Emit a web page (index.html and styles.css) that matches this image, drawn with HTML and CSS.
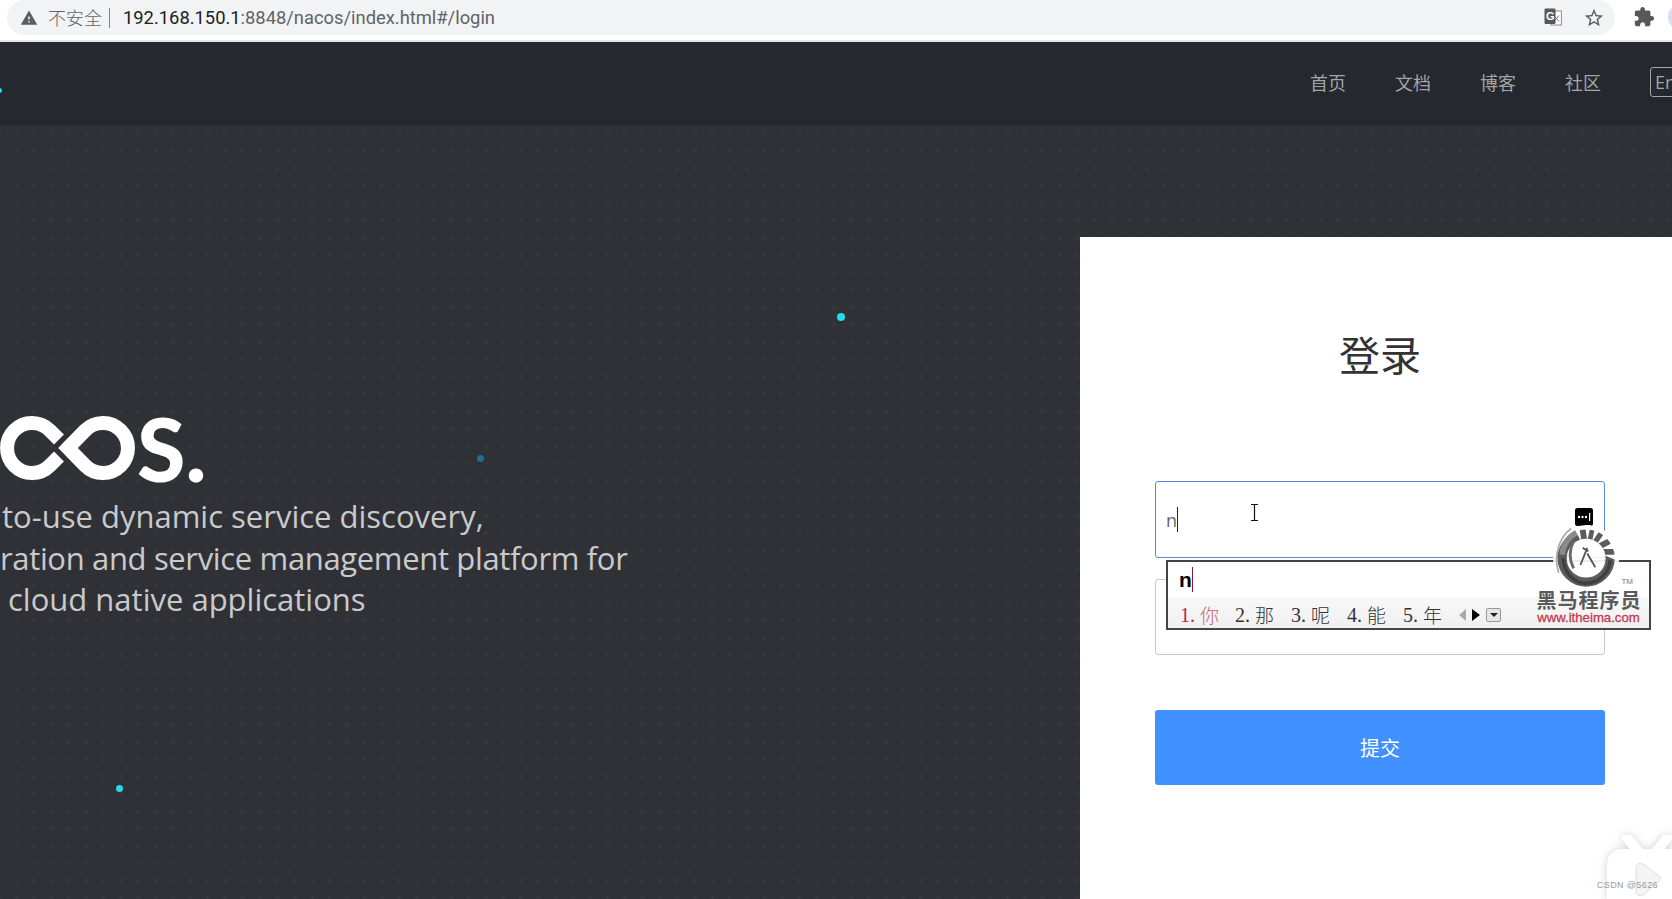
FILE: index.html
```html
<!DOCTYPE html>
<html lang="zh-CN">
<head>
<meta charset="utf-8">
<title>Nacos</title>
<link rel="stylesheet" href="styles.css">
</head>
<body>
<div class="page">
  <div class="toolbar">
    <div class="pill">
      <svg class="warn" viewBox="0 0 24 24"><path d="M1 21h22L12 2 1 21zm12-3h-2v-2h2v2zm0-4h-2v-4h2v4z"/></svg>
      <span class="insecure">不安全</span>
      <span class="sep"></span>
      <span class="url"><span class="host">192.168.150.1</span>:8848/nacos/index.html#/login</span>
      <svg class="translate" viewBox="0 0 18 19">
        <rect x="7" y="3" width="10.4" height="14" fill="#fff" stroke="#8a8d90" stroke-width="1"/>
        <path d="M10 7.500l5 6M15 7.500l-5 6" stroke="#7b7e82" stroke-width="1" fill="none"/>
        <rect x="0.5" y="0.5" width="11" height="15.5" rx="1.2" fill="#55585c"/>
        <text x="2" y="12" class="translate-g">G</text>
      </svg>
      <svg class="star" viewBox="0 0 24 24"><path d="M22 9.24l-7.19-.62L12 2 9.19 8.63 2 9.24l5.46 4.73L5.82 21 12 17.27 18.18 21l-1.63-7.03L22 9.24zM12 15.4l-3.76 2.27 1-4.28-3.32-2.88 4.38-.38L12 6.1l1.71 4.04 4.38.38-3.32 2.88 1 4.28L12 15.4z"/></svg>
    </div>
    <svg class="puzzle" viewBox="0 0 24 24"><path d="M20.5 11H19V7c0-1.1-.9-2-2-2h-4V3.5C13 2.12 11.88 1 10.5 1S8 2.12 8 3.5V5H4c-1.1 0-1.99.9-1.99 2v3.8H3.5c1.49 0 2.7 1.21 2.7 2.7s-1.21 2.7-2.7 2.7H2V20c0 1.1.9 2 2 2h3.8v-1.5c0-1.49 1.21-2.7 2.7-2.7 1.49 0 2.7 1.21 2.7 2.7V22H17c1.1 0 2-.9 2-2v-4h1.5c1.38 0 2.5-1.12 2.5-2.5S21.88 11 20.5 11z"/></svg>
    <span class="avatar"></span>
  </div>

  <header class="site-header">
    <nav class="nav">
      <a class="nav-link">首页</a>
      <a class="nav-link">文档</a>
      <a class="nav-link">博客</a>
      <a class="nav-link">社区</a>
      <span class="lang">En</span>
    </nav>
  </header>

  <main class="main">
    <section class="intro">
      <div class="logo">
        <svg class="logo-mark" viewBox="0 416 136 64">
          <path d="M59 439.5L49.900 430.500A25 25 0 1 0 49.900 465.500L59 456.500"/>
          <path d="M68 448L85.100 430.500A25 25 0 1 1 85.100 465.500Z"/>
        </svg>
        <span class="logo-text">S.</span>
      </div>
      <p class="tag tag-one">to-use dynamic service discovery,</p>
      <p class="tag tag-two">ration and service management platform for</p>
      <p class="tag tag-three">cloud native applications</p>
    </section>

    <section class="card">
      <h1 class="title">登录</h1>
      <div class="field field-active">
        <span class="typed">n</span><span class="caret"></span>
        <svg class="pw-icon" viewBox="0 0 18 18">
          <rect width="18" height="18" rx="2.500" fill="#000"/>
          <circle cx="4" cy="9" r="1.200" fill="#fff"/><circle cx="7.500" cy="9" r="1.200" fill="#fff"/><circle cx="11" cy="9" r="1.200" fill="#fff"/>
          <rect x="14" y="5" width="1.200" height="8" fill="#fff"/>
        </svg>
      </div>
      <div class="field field-plain"></div>
      <button class="submit">提交</button>
    </section>
  </main>

  <span class="particle p-header"></span>
  <span class="particle p-one"></span>
  <span class="particle p-two"></span>
  <span class="particle p-three"></span>

  <svg class="ibeam" viewBox="0 0 9 17">
    <path d="M1 .5h7M1 16.500h7M4.500 .5v16" stroke="#111" stroke-width="1.200" fill="none"/>
  </svg>

  <div class="ime">
    <div class="ime-input"><span class="ime-letter">n</span><span class="ime-caret"></span></div>
    <div class="ime-list">
      <span class="cand cand-on"><span class="num">1.</span><span class="han">你</span></span>
      <span class="cand"><span class="num">2.</span><span class="han">那</span></span>
      <span class="cand"><span class="num">3.</span><span class="han">呢</span></span>
      <span class="cand"><span class="num">4.</span><span class="han">能</span></span>
      <span class="cand"><span class="num">5.</span><span class="han">年</span></span>
      <span class="arrow arrow-left"></span>
      <span class="arrow arrow-right"></span>
      <span class="ime-more"><span class="ime-more-tri"></span></span>
    </div>
  </div>

  <div class="mark">
    <svg class="mark-horse" viewBox="4 4 56 56">
      <circle cx="33" cy="33" r="29" fill="#fff" fill-opacity=".9"/>
      <path d="M20 7C10 14 4 30 9 46" stroke="#aaa" stroke-width="1.500" fill="none"/>
      <circle cx="33" cy="33" r="21" fill="none" stroke="#5c5c5c" stroke-width="8"/>
      <path d="M13 33C13 45 22 55 33 55C44 55 53 46 54 35" stroke="#3f3f3f" stroke-width="3" fill="none"/>
      <path d="M12 30C13 20 19 13 26 10" stroke="#8a8a8a" stroke-width="5" fill="none"/>
      <path d="M22 6L29 19 27 5ZM32 4L34 18 37 4ZM41 5L38 19 46 7ZM50 10L42 21 54 15ZM57 19L46 25 60 25ZM61 30L48 30 60 35Z" fill="#fff"/>
      <path d="M22 18C18 26 18 34 22 42" stroke="#6a6a6a" stroke-width="2.500" fill="none"/>
      <path d="M34 24L28 39M34 29L41 41M30 24L35 27" stroke="#555" stroke-width="1.600" fill="none"/>
    </svg>
    <span class="mark-tm">TM</span>
    <span class="mark-name">黑马程序员</span>
    <span class="mark-url">www.itheima.com</span>
  </div>

  <div class="tv">
    <svg class="tv-icon" viewBox="0 0 66 64">
      <path d="M21 3L33 17M61 3L50 17" stroke="#fff" stroke-width="10" stroke-linecap="round"/>
      <rect x="1" y="14" width="90" height="70" rx="15" fill="#fff"/>
      <path d="M30 34C30 29 33 27 37 29L52 40C55 42 55 45 52 47L37 60C33 62 30 60 30 55Z" fill="#f4f4f4" stroke="#ddd" stroke-width="1"/>
    </svg>
    <span class="csdn">CSDN @5626</span>
  </div>
</div>
</body>
</html>
```

FILE: styles.css
```css
* { box-sizing: border-box; }

html, body {
  margin: 0;
  height: 100%;
  overflow: hidden;
}

body {
  font-family: "Noto Sans CJK SC", "Open Sans", sans-serif;
  background: #fff;
}

.page {
  position: relative;
  width: 1672px;
  height: 899px;
  overflow: hidden;
  display: flex;
  flex-direction: column;
}

/* browser toolbar */
.toolbar {
  flex: none;
  height: 42px;
  display: flex;
  align-items: flex-start;
  padding-left: 7px;
  background: #fff;
  border-bottom: 2px solid #e4e5e6;
}

.pill {
  flex: none;
  width: 1608px;
  height: 35px;
  border-radius: 18px;
  background: #f1f3f4;
  display: flex;
  align-items: center;
  padding: 0 10px 0 13px;
  font-size: 18px;
  color: #5f6368;
}

.warn {
  width: 18px;
  height: 18px;
  fill: #5a5d61;
  flex: none;
}

.insecure {
  margin-left: 10px;
  line-height: 35px;
  font-family: "Noto Sans CJK SC", sans-serif;
  font-weight: 300;
}

.sep {
  width: 1px;
  height: 20px;
  margin-left: 7px;
  background: #80868b;
}

.url {
  margin-left: 13px;
  font-family: "Roboto", "Liberation Sans", sans-serif;
  font-size: 18.35px;
  line-height: 35px;
}

.host { color: #202124; }

.translate {
  width: 18px;
  height: 19px;
  margin-left: auto;
  margin-right: 21px;
}

.translate-g {
  font-family: "Liberation Sans", sans-serif;
  font-weight: 700;
  font-size: 11px;
  fill: #fff;
}

.star {
  width: 22px;
  height: 22px;
  fill: #5a5d61;
}

.puzzle {
  flex: none;
  width: 22px;
  height: 22px;
  margin: 6px 0 0 18px;
  fill: #55585c;
}

.avatar {
  width: 26px;
  height: 26px;
  margin: 4px 0 0 13px;
  border-radius: 50%;
  background: #d9dcf2;
  flex: none;
}

/* site header */
.site-header {
  flex: none;
  height: 83px;
  background: #25282f;
  display: flex;
  align-items: center;
  justify-content: flex-end;
  overflow: hidden;
}

.nav {
  display: flex;
  align-items: center;
  gap: 49px;
  margin-right: -28px;
  padding-bottom: 3px;
}

.nav-link {
  font-size: 18px;
  line-height: 30px;
  color: #a3a5a9;
}

.lang {
  width: 50px;
  height: 30px;
  padding-left: 4px;
  border: 1px solid #a3a5a9;
  border-radius: 3px;
  font-family: "Open Sans", sans-serif;
  font-size: 18px;
  line-height: 28px;
  color: #a3a5a9;
  flex: none;
}

/* main */
.main {
  flex: 1;
  min-height: 0;
  display: flex;
  justify-content: space-between;
  background-color: #303136;
  background-image: radial-gradient(circle at center, #36373b 0, #36373b 1.800px, transparent 2.600px);
  background-size: 17.400px 17.400px;
  background-position: 7.800px -0.400px;
}

.intro {
  width: 760px;
  padding-top: 291px;
  font-family: "Open Sans", sans-serif;
}

.logo {
  height: 64px;
  display: flex;
  align-items: center;
  margin-bottom: 16px;
}

.logo-mark {
  width: 136px;
  height: 64px;
  flex: none;
  fill: none;
  stroke: #fff;
  stroke-width: 14;
  stroke-miterlimit: 4;
}

.logo-text {
  font-family: "Lato", sans-serif;
  font-weight: 900;
  font-size: 88px;
  line-height: 64px;
  color: #fff;
  margin-left: 1px;
}

.tag {
  margin: 0;
  font-size: 31px;
  line-height: 41.6px;
  color: #c9cacc;
  white-space: nowrap;
}

.tag-one { padding-left: 2px; }
.tag-two { letter-spacing: -.35px; }
.tag-three { padding-left: 8px; }

.card {
  width: 592px;
  margin-top: 112px;
  padding: 96px 67px 0 75px;
  background: #fff;
  display: flex;
  flex-direction: column;
}

.title {
  margin: 0 0 108px;
  font-size: 41px;
  line-height: 40px;
  font-weight: 400;
  text-align: center;
  color: #333;
}

.field {
  height: 77px;
  margin-bottom: 21px;
  border: 1px solid #c8c9cc;
  border-radius: 3px;
  display: flex;
  align-items: center;
  padding: 0 11px 0 10px;
}

.field-active {
  border-color: #5b87dc;
}

.field-plain {
  height: 76px;
}

.typed {
  font-family: "Open Sans", sans-serif;
  font-size: 18px;
  color: #666;
}

.caret {
  width: 1px;
  height: 25px;
  background: #222;
}

.pw-icon {
  width: 18px;
  height: 18px;
  margin-left: auto;
  margin-top: -5px;
}

.submit {
  height: 75px;
  margin-top: 34px;
  border: 0;
  border-radius: 3px;
  background: #4190ff;
  color: #fff;
  font-family: inherit;
  font-size: 20px;
}

/* overlays */
.particle {
  position: absolute;
  border-radius: 50%;
  background: #22dcea;
}

.p-header { left: -3px; top: 88px; width: 5px; height: 5px; }
.p-one { left: 837px; top: 313px; width: 8px; height: 8px; }
.p-two { left: 477px; top: 455px; width: 7px; height: 7px; background: #1e6f94; }
.p-three { left: 116px; top: 785px; width: 7px; height: 7px; }

.ibeam {
  position: absolute;
  left: 1250px;
  top: 504px;
  width: 9px;
  height: 17px;
}

.ime {
  position: absolute;
  left: 1166px;
  top: 560px;
  width: 485px;
  height: 70px;
  border: 2px solid #444;
  background: #fff;
  display: flex;
  flex-direction: column;
}

.ime-input {
  height: 35px;
  display: flex;
  align-items: center;
  padding-left: 11px;
}

.ime-letter {
  font-family: "Liberation Sans", sans-serif;
  font-weight: 700;
  font-size: 21px;
  color: #000;
}

.ime-caret {
  width: 1px;
  height: 25px;
  background: #8c1c30;
}

.ime-list {
  flex: 1;
  display: flex;
  align-items: center;
  padding: 4px 0 0 12px;
  background: linear-gradient(#f8f8f8, #f0f0f0);
  color: #333;
  font-size: 18px;
}

.cand {
  width: 56px;
  display: flex;
  align-items: center;
  gap: 5px;
  line-height: 24px;
  flex: none;
}

.cand:first-child { width: 55px; }
.cand-on { color: #b5283f; }
.cand-on .han { color: #c8606f; }

.num { font-family: "Liberation Serif", serif; font-size: 20px; }
.han { font-family: "Noto Sans CJK SC", sans-serif; font-weight: 300; font-size: 19px; }

.arrow {
  width: 0;
  height: 0;
  border-top: 6px solid transparent;
  border-bottom: 6px solid transparent;
}

.arrow-left { border-right: 7px solid #aaa; }
.arrow-right { border-left: 8px solid #000; margin-left: 6px; }

.ime-more {
  width: 15px;
  height: 14px;
  margin-left: 6px;
  border: 1px solid #999;
  border-radius: 2px;
  background: #e6e6e6;
  display: flex;
  align-items: center;
  justify-content: center;
}

.ime-more-tri {
  width: 0;
  height: 0;
  border-left: 4px solid transparent;
  border-right: 4px solid transparent;
  border-top: 4px solid #222;
}

.mark {
  position: absolute;
  left: 1530px;
  top: 525px;
  width: 120px;
  height: 100px;
  display: flex;
  flex-direction: column;
  align-items: center;
}

.mark-horse {
  width: 64px;
  height: 64px;
  margin-left: -11px;
  flex: none;
  overflow: visible;
}

.mark-tm {
  position: absolute;
  right: 17px;
  top: 52px;
  font-family: "Liberation Sans", sans-serif;
  font-size: 8px;
  color: #777;
}

.mark-name {
  font-family: "Noto Sans CJK SC", sans-serif;
  font-weight: 700;
  font-size: 20px;
  line-height: 21px;
  letter-spacing: 1px;
  color: #5a5a5a;
  margin-left: -2px;
}

.mark-url {
  font-family: "Liberation Sans", sans-serif;
  font-weight: 400;
  font-size: 13.2px;
  line-height: 15px;
  color: #c23a50;
  margin-left: -3px;
  -webkit-text-stroke: .3px #c23a50;
}

.tv {
  position: absolute;
  right: 0;
  bottom: 0;
  width: 66px;
  height: 64px;
}

.tv-icon {
  width: 66px;
  height: 64px;
  display: block;
  filter: drop-shadow(0 0 4px rgba(0, 0, 0, .18));
}

.csdn {
  position: absolute;
  right: 14px;
  bottom: 9px;
  font-family: "Liberation Sans", sans-serif;
  font-size: 9px;
  letter-spacing: .4px;
  color: #999;
  white-space: nowrap;
}
```
